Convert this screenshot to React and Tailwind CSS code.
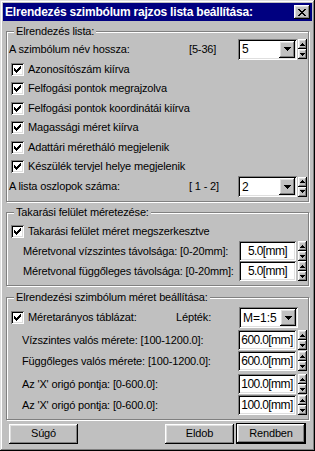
import React from "react";

const raised =
  "bg-[#c0c0c0] shadow-[inset_-1px_-1px_#000,inset_1px_1px_#fff,inset_-2px_-2px_#808080,inset_2px_2px_#dfdfdf]";
const sunken =
  "bg-white shadow-[inset_1px_1px_#808080,inset_-1px_-1px_#fff,inset_2px_2px_#000,inset_-2px_-2px_#dfdfdf]";

function Check() {
  return (
    <span className={`w-[13px] h-[13px] shrink-0 flex items-center justify-center ${sunken}`}>
      <svg width="7" height="7" viewBox="0 0 7 7" shapeRendering="crispEdges">
        <path d="M0 2h1v3H0zM1 3h1v3H1zM2 4h1v3H2zM3 3h1v3H3zM4 2h1v3H4zM5 1h1v3H5zM6 0h1v3H6z" fill="#000" />
      </svg>
    </span>
  );
}

function CheckRow({ label, h = "h-[20px]" }) {
  return (
    <div className={`${h} flex items-center pl-[3px] gap-[4px]`}>
      <Check />
      <span className="whitespace-nowrap">{label}</span>
    </div>
  );
}

function Spinner() {
  return (
    <div className="w-[9px] h-[20px] flex flex-col shrink-0">
      <div className={`h-[10px] flex items-center justify-center ${raised}`}>
        <svg width="5" height="3" viewBox="0 0 5 3" shapeRendering="crispEdges">
          <path d="M2 0h1v1h1v1h1v1H0V2h1V1h1z" fill="#000" />
        </svg>
      </div>
      <div className={`h-[10px] flex items-center justify-center ${raised}`}>
        <svg width="5" height="3" viewBox="0 0 5 3" shapeRendering="crispEdges">
          <path d="M0 0h5v1H4v1H3v1H2V2H1V1H0z" fill="#000" />
        </svg>
      </div>
    </div>
  );
}

function Combo({ value }) {
  return (
    <div className={`w-[59px] h-[21px] shrink-0 flex items-center pl-[4px] pr-[2px] ${sunken}`}>
      <span className="flex-1 text-[12px] tracking-normal">{value}</span>
      <div className={`w-[16px] h-[17px] flex items-center justify-center ${raised}`}>
        <svg width="7" height="4" viewBox="0 0 7 4" shapeRendering="crispEdges">
          <path d="M0 0h7v1H6v1H5v1H4v1H3V3H2V2H1V1H0z" fill="#000" />
        </svg>
      </div>
    </div>
  );
}

function NumInput({ value, w = "w-[57px]" }) {
  return (
    <div className={`${w} h-[20px] shrink-0 flex items-center justify-center whitespace-nowrap text-[12px] tracking-[-0.6px] ${sunken}`}>
      {value}
    </div>
  );
}

function Group({ title, className = "", children }) {
  return (
    <fieldset
      className={`mx-[3px] border border-[#808080] shadow-[inset_1px_1px_#fff,1px_1px_#fff] px-[1px] ${className}`}
    >
      <legend className="ml-[6px] px-[2px] h-[13px] leading-[13px] bg-[#c0c0c0]">{title}</legend>
      {children}
    </fieldset>
  );
}

export default function App() {
  return (
    <div className="w-[315px] h-[451px] bg-[#c0c0c0] p-[3px] flex flex-col text-[11px] tracking-[-0.15px] text-black font-['Liberation_Sans',Arial,sans-serif] shadow-[inset_-1px_-1px_#000,inset_1px_1px_#dfdfdf,inset_-2px_-2px_#808080,inset_2px_2px_#fff]">
      {/* title bar */}
      <div className="h-[18px] bg-[#000080] flex items-center justify-between pl-[2px] pr-[2px]">
        <span className="text-white font-bold text-[12px] tracking-[-0.2px] whitespace-nowrap">
          Elrendezés szimbólum rajzos lista beállítása:
        </span>
        <div className={`w-[16px] h-[14px] flex items-center justify-center ${raised}`}>
          <svg width="8" height="7" viewBox="0 0 8 7" shapeRendering="crispEdges">
            <path
              d="M0 0h2v1H0zM6 0h2v1H6zM1 1h2v1H1zM5 1h2v1H5zM2 2h4v1H2zM3 3h2v1H3zM2 4h4v1H2zM1 5h2v1H1zM5 5h2v1H5zM0 6h2v1H0zM6 6h2v1H6z"
              fill="#000"
            />
          </svg>
        </div>
      </div>

      {/* group 1 */}
      <Group title="Elrendezés lista:" className="mt-[4px] pt-[1px] pb-[4px]">
        <div className="h-[20px] flex items-center">
          <span className="w-[181px] pl-[1px] whitespace-nowrap">A szimbólum név hossza:</span>
          <span className="w-[49px]">[5-36]</span>
          <Combo value="5" />
          <div className="ml-[1px]">
            <Spinner />
          </div>
        </div>
        <CheckRow label="Azonosítószám kiírva" />
        <CheckRow label="Felfogási pontok megrajzolva" h="h-[19px]" />
        <CheckRow label="Felfogási pontok koordinátái kiírva" />
        <CheckRow label="Magassági méret kiírva" h="h-[19px]" />
        <CheckRow label="Adattári méretháló megjelenik" />
        <CheckRow label="Készülék tervjel helye megjelenik" h="h-[19px]" />
        <div className="h-[21px] flex items-center">
          <span className="w-[181px] pl-[1px] whitespace-nowrap">A lista oszlopok száma:</span>
          <span className="w-[49px]">[ 1 - 2]</span>
          <Combo value="2" />
          <div className="ml-[1px]">
            <Spinner />
          </div>
        </div>
      </Group>

      {/* group 2 */}
      <Group title="Takarási felület méretezése:" className="mt-[4px] pt-[3px] pb-[4px]">
        <CheckRow label="Takarási felület méret megszerkesztve" h="h-[19px]" />
        <div className="h-[20px] flex items-center">
          <span className="w-[231px] pl-[15px] whitespace-nowrap">Méretvonal vízszintes távolsága: [0-20mm]:</span>
          <NumInput value="5.0[mm]" />
          <div className="ml-[2px]">
            <Spinner />
          </div>
        </div>
        <div className="h-[20px] flex items-center">
          <span className="w-[231px] pl-[15px] whitespace-nowrap">Méretvonal függőleges távolsága: [0-20mm]:</span>
          <NumInput value="5.0[mm]" />
          <div className="ml-[2px]">
            <Spinner />
          </div>
        </div>
      </Group>

      {/* group 3 */}
      <Group title="Elrendezési szimbólum méret beállítása:" className="mt-[5px] pt-[3px] pb-[4px]">
        <div className="h-[21px] flex items-center pl-[3px]">
          <Check />
          <span className="ml-[4px] w-[148px] whitespace-nowrap">Méretarányos táblázat:</span>
          <span className="w-[63px]">Lépték:</span>
          <Combo value="M=1:5" />
        </div>
        {[
          ["Vízszintes valós mérete: [100-1200.0]:", "600.0[mm]", "mt-[2px]"],
          ["Függőleges valós mérete: [100-1200.0]:", "600.0[mm]", "mt-[1px]"],
          ["Az 'X' origó pontja: [0-600.0]:", "100.0[mm]", "mt-[3px]"],
          ["Az 'X' origó pontja: [0-600.0]:", "100.0[mm]", "mt-[1px]"],
        ].map(([label, value, mt], i) => (
          <div key={i} className={`h-[20px] flex items-center ${mt}`}>
            <span className="w-[230px] pl-[14px] whitespace-nowrap">{label}</span>
            <NumInput value={value} w="w-[58px]" />
            <div className="ml-[2px]">
              <Spinner />
            </div>
          </div>
        ))}
      </Group>

      {/* buttons */}
      <div className="mt-[3px] flex items-center pl-[6px]">
        <button className={`w-[69px] h-[20px] ${raised}`}>Súgó</button>
        <button className={`ml-[87px] w-[69px] h-[20px] ${raised}`}>Eldob</button>
        <div className="ml-[2px] border border-black">
          <button className={`w-[68px] h-[19px] block ${raised}`}>Rendben</button>
        </div>
      </div>
    </div>
  );
}
